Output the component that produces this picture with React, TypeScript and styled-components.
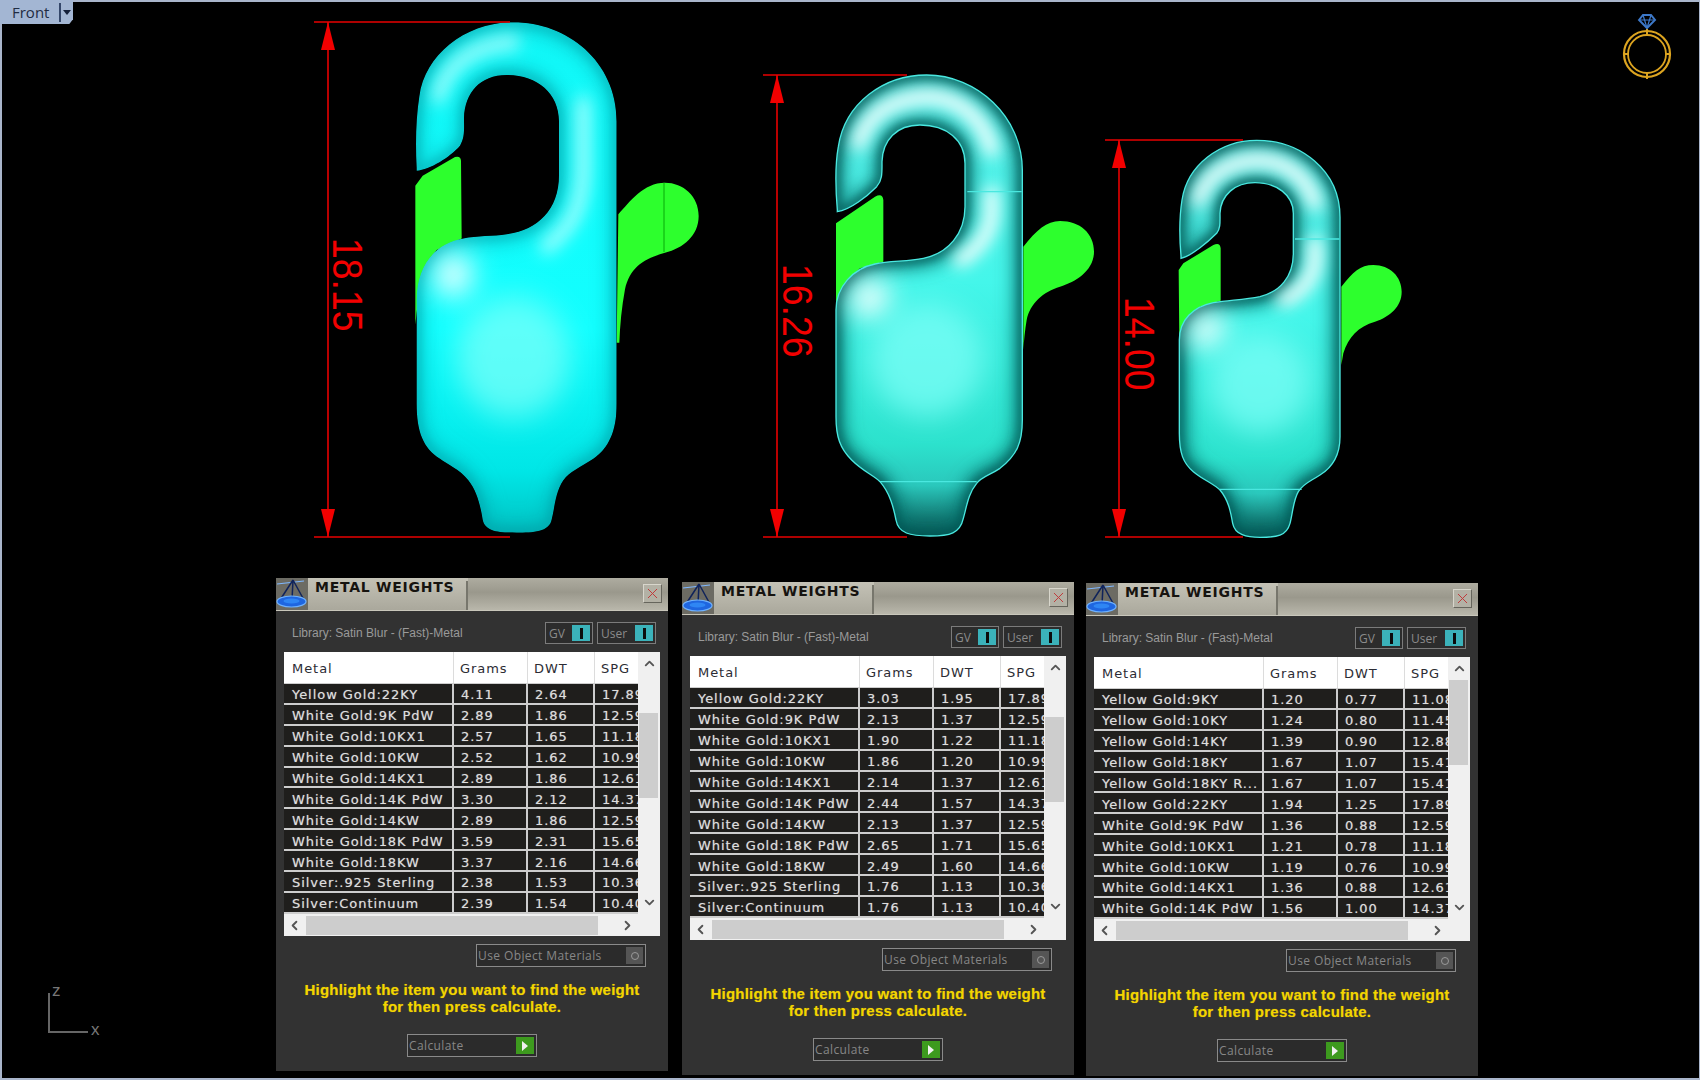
import { ChevronDown, ChevronLeft, ChevronRight, ChevronUp, X } from "lucide-react";
import styled, { createGlobalStyle } from "styled-components";

const GlobalStyle = createGlobalStyle`
    html, body {
        margin: 0;
        background: #000;
    }
`

const Canvas = styled.div`
    position: relative;
    width: 1700px;
    height: 1080px;
    overflow: hidden;
    background: #000;
    box-shadow: inset 2px 2px 0 #a9b5cb, inset -1px -2px 0 #a9b5cb;
    font-family: "DejaVu Sans", sans-serif;
`

const Drawing = styled.svg`
    position: absolute;
    left: 0;
    top: 0;
`

const FrontTab = styled.div`
    position: absolute;
    left: 0;
    top: 0;
    width: 73px;
    height: 24px;
    display: flex;
    align-items: center;
    box-sizing: border-box;
    padding-left: 12px;
    background: #a3b6d3;
    clip-path: polygon(0 0, 100% 0, 100% 80%, 95% 100%, 0 100%);
    color: #1f2c42;
    font-family: "Open Sans", sans-serif;
    font-size: 15px;
`

const FrontDivider = styled.span`
    width: 2px;
    height: 19px;
    margin-left: 10px;
    background: #34476a;
`

const FrontArrow = styled.span`
    width: 0;
    height: 0;
    margin-left: 2px;
    border-left: 4px solid transparent;
    border-right: 4px solid transparent;
    border-top: 5px solid #14203a;
`

const Panel = styled.div<{ $x: number; $y: number }>`
    position: absolute;
    left: ${props => props.$x}px;
    top: ${props => props.$y}px;
    width: 392px;
    height: 493px;
    display: flex;
    flex-direction: column;
    background: #323232;
`

const TitleBar = styled.div`
    height: 33px;
    flex: none;
    display: flex;
    box-sizing: border-box;
    border-bottom: 1px solid #c9c7bb;
    background: linear-gradient(#aeaca0, #9a988c 45%, #b9b7ab);
`

const TitleTab = styled.div`
    width: 160px;
    box-sizing: border-box;
    padding-left: 7px;
    margin-top: 3px;
    border-right: 2px solid #77766c;
    color: #16130f;
    font-size: 14px;
    line-height: 12px;
    font-weight: bold;
    letter-spacing: 0.75px;
    white-space: nowrap;
`

const TitleTabBackground = styled.div`
    display: flex;
    background: linear-gradient(#c4c2b6, #aaa89c);
`

const TitleRest = styled.div`
    flex: 1;
    display: flex;
    justify-content: flex-end;
    padding: 6px 6px 0 0;
`

const CloseButton = styled.div`
    width: 19px;
    height: 19px;
    display: flex;
    align-items: center;
    justify-content: center;
    box-sizing: border-box;
    border: 1px solid #d8d6cc;
    border-right-color: #66655c;
    border-bottom-color: #66655c;
    background: #b3b1a5;
    color: #c03a3a;
`

const LibraryRow = styled.div`
    height: 41px;
    flex: none;
    display: flex;
    align-items: center;
    box-sizing: border-box;
    padding: 3px 12px 0 16px;
`

const LibraryLabel = styled.span`
    flex: 1;
    color: #9a9a9a;
    font-family: "Liberation Sans", sans-serif;
    font-size: 12px;
`

const ToggleBox = styled.div<{ $width: number }>`
    width: ${props => props.$width}px;
    height: 22px;
    margin-left: 4px;
    display: flex;
    align-items: center;
    box-sizing: border-box;
    padding: 2px 2px 2px 3px;
    border: 1px solid #7b7b7b;
    background: #2c2c2c;
    color: #8b8b8b;
    font-family: "Open Sans", sans-serif;
    font-size: 12px;
`

const BoxLabel = styled.span`
    flex: 1;
    white-space: nowrap;
`

const ToggleKnob = styled.span`
    width: 18px;
    height: 100%;
    display: flex;
    align-items: center;
    justify-content: center;
    background: #3bb2ba;
    &::after {
        content: "";
        width: 3px;
        height: 11px;
        background: #0c0c0c;
    }
`

const TableFrame = styled.div`
    margin: 0 8px;
    height: 284px;
    flex: none;
    display: grid;
    grid-template-columns: 354px 22px;
    grid-template-rows: 262px 22px;
    background: #f0f0f0;
    font-size: 13px;
    letter-spacing: 0.95px;
`

const TableView = styled.div`
    overflow: hidden;
    padding-bottom: 1px;
`

const HeaderRow = styled.div`
    height: 32px;
    box-sizing: border-box;
    border-bottom: 1px solid #cdcdcd;
    display: grid;
    grid-template-columns: 168px 72px 65px 44px;
    gap: 2px;
    background: #fff;
`

const HeaderCell = styled.div<{ $first?: boolean }>`
    display: flex;
    align-items: center;
    padding: 1px 0 0 ${props => (props.$first ? 8 : 6)}px;
    border-right: 1px solid #dcdcdc;
    margin-right: -2px;
    color: #2c2c34;
`

const DataRow = styled.div`
    height: 20.9px;
    box-sizing: border-box;
    padding-bottom: 2px;
    display: grid;
    grid-template-columns: 168px 72px 65px 44px;
    gap: 2px;
    background: #cdcdcd;
`

const DataCell = styled.div<{ $first?: boolean }>`
    display: flex;
    align-items: center;
    padding: 3px 0 0 ${props => (props.$first ? 8 : 7)}px;
    overflow: hidden;
    background: #1f1e1c;
    color: #dedede;
    text-shadow: 0 0 1px rgba(222, 222, 222, 0.55);
    white-space: nowrap;
`

const VerticalBar = styled.div`
    display: flex;
    flex-direction: column;
    align-items: center;
    justify-content: space-between;
    padding: 4px 0;
    position: relative;
    color: #555;
`

const VerticalThumb = styled.div<{ $top: number }>`
    position: absolute;
    left: 1px;
    right: 2px;
    top: ${props => props.$top}px;
    height: 85px;
    background: #cdcdcd;
`

const HorizontalBar = styled.div`
    position: relative;
    display: flex;
    align-items: center;
    justify-content: space-between;
    padding: 0 3px;
    color: #555;
`

const HorizontalThumb = styled.div`
    position: absolute;
    left: 22px;
    width: 292px;
    top: 2px;
    bottom: 1px;
    background: #cdcdcd;
`

const OptionRow = styled.div`
    display: flex;
    justify-content: flex-end;
    padding: 8px 22px 0 0;
`

const OptionBox = styled.div<{ $width: number }>`
    width: ${props => props.$width}px;
    height: 23px;
    display: flex;
    align-items: center;
    box-sizing: border-box;
    padding: 2px 2px 2px 1px;
    border: 1px solid #8a8a8a;
    background: #2b2b2b;
    color: #878787;
    font-family: "Open Sans", sans-serif;
    font-size: 12px;
    letter-spacing: 0.4px;
`

const RadioKnob = styled.span`
    width: 17px;
    height: 100%;
    display: flex;
    align-items: center;
    justify-content: center;
    background: #555;
    &::after {
        content: "";
        width: 6px;
        height: 6px;
        border: 1px solid #9a9a9a;
        border-radius: 50%;
    }
`

const Instruction = styled.div`
    margin-top: 14px;
    color: #f3d500;
    font-family: "Liberation Sans", sans-serif;
    font-size: 15px;
    line-height: 17px;
    font-weight: bold;
    letter-spacing: 0.24px;
    text-shadow: 0 0 1px rgba(243, 213, 0, 0.5);
    text-align: center;
`

const CalculateRow = styled.div`
    display: flex;
    justify-content: center;
    margin-top: 19px;
`

const PlayKnob = styled.span`
    width: 18px;
    height: 100%;
    display: flex;
    align-items: center;
    justify-content: center;
    background: #3d9a1e;
    &::after {
        content: "";
        border-left: 6px solid #f0f0f0;
        border-top: 5px solid transparent;
        border-bottom: 5px solid transparent;
    }
`

const DimensionLabel = styled.text`
    fill: #f20000;
    font-family: "Liberation Sans", sans-serif;
    font-size: 42px;
`

const AxisLabel = styled.text`
    fill: #777;
    font-family: "Liberation Sans", sans-serif;
    font-size: 17px;
`

type HookSpec = {
    id: string;
    x: number;
    y: number;
    scaleY: number;
    body: string;
    greens: string[];
    seams: string[];
    streaks: string[];
    blobs: number[][];
    outlined: boolean;
}

const hooks: HookSpec[] = [
    {
        id: "a", x: 300, y: 0, scaleY: 0.357, outlined: false,
        body: "M350 470 C346 400 348 330 358 270 C375 150 500 62 640 62 C800 62 950 170 950 340 L950 1130 C950 1210 925 1255 880 1285 C840 1310 810 1320 790 1345 C765 1380 765 1420 755 1455 C748 1490 700 1492 650 1492 C600 1492 555 1490 548 1455 C540 1410 530 1375 505 1345 C480 1315 440 1300 420 1285 C370 1255 350 1210 350 1130 L350 840 C350 740 410 680 490 668 C530 660 580 662 620 656 C710 645 777 590 777 490 L777 340 C777 260 710 210 620 210 C540 210 495 260 492 330 C492 360 495 385 480 408 C450 440 390 475 350 478 Z",
        greens: [
            "M346 520 L368 492 L465 440 Q482 436 483 450 L485 668 L410 700 Q360 760 346 910 Z",
            "M955 600 C990 565 1030 512 1095 512 C1150 512 1196 550 1196 605 C1196 660 1150 695 1095 708 C1030 725 990 750 975 810 C965 860 960 910 958 960 L950 960 Z",
        ],
        seams: [],
        streaks: ["M415 270 C440 175 530 125 640 118", "M850 290 L850 480 C845 590 810 640 740 690"],
        blobs: [[460, 770, 60], [640, 1000, 170]],
    },
    {
        id: "b", x: 760, y: 60, scaleY: 1 / 3, outlined: true,
        body: "M232 450 C226 380 226 310 235 260 C255 130 370 45 500 45 C650 45 787 170 787 330 L787 1080 C787 1150 770 1185 720 1225 C690 1245 665 1250 650 1270 C625 1300 620 1340 610 1375 C600 1420 570 1428 510 1428 C450 1428 415 1420 408 1380 C400 1340 390 1300 360 1265 C340 1245 310 1235 275 1200 C240 1165 228 1130 228 1070 L228 750 C228 680 280 625 345 612 C390 602 440 605 490 595 C565 580 615 520 615 440 L615 310 C615 240 560 195 480 195 C410 195 368 240 366 305 C366 335 368 360 350 380 C320 410 270 450 232 455 Z",
        greens: [
            "M228 490 L345 410 Q368 398 370 420 L370 605 L300 625 Q250 670 228 750 Z",
            "M790 560 C830 510 860 483 900 483 C960 483 1002 520 1002 575 C1002 630 950 665 900 680 C850 695 810 730 800 780 C795 810 792 840 790 870 Z",
        ],
        seams: ["M622 395 L785 395", "M360 1265 L650 1265"],
        streaks: ["M295 250 C320 160 400 115 500 110 C590 110 670 170 695 270", "M695 400 L695 470 C685 530 650 570 600 600"],
        blobs: [[330, 715, 60], [500, 900, 170]],
    },
    {
        id: "c", x: 1100, y: 130, scaleY: 1 / 3, outlined: true,
        body: "M243 378 C238 320 238 260 246 210 C262 105 360 31 470 31 C600 31 720 120 720 262 L720 920 C720 975 700 1010 660 1035 C630 1055 610 1060 595 1085 C580 1110 578 1150 570 1180 C560 1218 530 1222 480 1222 C440 1222 405 1215 398 1180 C392 1145 385 1110 360 1080 C340 1060 310 1050 280 1025 C250 1000 238 970 238 910 L238 630 C238 570 280 530 340 518 C390 510 430 510 480 500 C540 485 580 440 580 370 L580 250 C580 195 530 158 465 158 C405 158 362 195 360 250 C360 275 362 295 350 310 C325 335 275 378 243 385 Z",
        greens: [
            "M236 420 L250 400 L340 345 Q360 335 362 355 L362 512 L300 530 Q260 570 238 630 Z",
            "M724 470 C760 425 780 405 820 405 C870 405 905 440 905 485 C905 530 870 560 825 575 C775 590 745 620 730 670 L724 705 Z",
        ],
        seams: ["M585 327 L718 327", "M360 1078 L605 1078"],
        streaks: ["M295 210 C315 135 385 95 470 90 C545 90 620 130 645 220", "M645 340 L645 400 C635 450 600 490 550 510"],
        blobs: [[320, 600, 55], [480, 760, 150]],
    },
]

const dimensions = [
    { x: 328, top: 22, bottom: 537, from: 314, to: 510, label: "18.15", labelX: 333, labelY: 238 },
    { x: 777, top: 75, bottom: 537, from: 763, to: 907, label: "16.26", labelX: 783, labelY: 264 },
    { x: 1119, top: 140, bottom: 537, from: 1105, to: 1243, label: "14.00", labelX: 1125, labelY: 297 },
]

const Blur = ({ id, amount }: { id: string; amount: number }) => (
    <filter id={id} filterUnits="userSpaceOnUse" x="-200" y="-200" width="1800" height="2100">
        <feGaussianBlur stdDeviation={amount} />
    </filter>
)

const Hook = ({ spec }: { spec: HookSpec }) => {
    const base = `base-${spec.id}`;
    const clip = `clip-${spec.id}`;
    return (
        <g transform={`translate(${spec.x} ${spec.y}) scale(${1 / 3} ${spec.scaleY})`}>
            {spec.greens.map(d => <path key={d} d={d} fill="#2dff2d" />)}
            {spec.id === "a" && <path d="M1092 512 L1092 706" stroke="#12c012" strokeWidth="4" />}
            <defs>
                <clipPath id={clip}><path d={spec.body} /></clipPath>
                <linearGradient id={base} x1="0" y1="0" x2="0" y2="1">
                    {spec.outlined ? (
                        <>
                            <stop offset="0" stopColor="#58efe9" />
                            <stop offset="0.45" stopColor="#44f6ea" />
                            <stop offset="0.8" stopColor="#2ce2cd" />
                            <stop offset="0.89" stopColor="#2ac8bc" />
                            <stop offset="0.96" stopColor="#127a74" />
                            <stop offset="1" stopColor="#0b4f4e" />
                        </>
                    ) : (
                        <>
                            <stop offset="0" stopColor="#10f8f8" />
                            <stop offset="0.6" stopColor="#12ffff" />
                            <stop offset="0.88" stopColor="#00e6e6" />
                            <stop offset="1" stopColor="#00c4c4" />
                        </>
                    )}
                </linearGradient>
                <Blur id={`soft-${spec.id}`} amount={15} />
                <Blur id={`mid-${spec.id}`} amount={24} />
                <Blur id={`wide-${spec.id}`} amount={42} />
            </defs>
            <g clipPath={`url(#${clip})`}>
                <path d={spec.body} fill={`url(#${base})`} />
                {/* broad falloff towards the edge, then the tight dark rim */}
                <path
                    d={spec.body}
                    fill="none"
                    stroke={spec.outlined ? "#0a6f6a" : "#00a2aa"}
                    strokeWidth="70"
                    strokeOpacity={spec.outlined ? 0.55 : 0.32}
                    filter={`url(#mid-${spec.id})`}
                />
                <path
                    d={spec.body}
                    fill="none"
                    stroke={spec.outlined ? "#06524f" : "#00939a"}
                    strokeWidth={spec.outlined ? 26 : 22}
                    strokeOpacity={spec.outlined ? 0.8 : 0.55}
                    filter={`url(#soft-${spec.id})`}
                />
                {spec.streaks.map(d => (
                    <path
                        key={d}
                        d={d}
                        fill="none"
                        stroke="#fff"
                        strokeWidth="42"
                        strokeLinecap="round"
                        strokeOpacity={spec.outlined ? 0.95 : 0.6}
                        filter={`url(#mid-${spec.id})`}
                    />
                ))}
                {spec.blobs.map(([cx, cy, r], i) => (
                    <circle
                        key={cx}
                        cx={cx}
                        cy={cy}
                        r={r}
                        fill={i === 0 ? "#fff" : "#7ffff8"}
                        fillOpacity={i === 0 ? 0.95 : 0.7}
                        filter={`url(#wide-${spec.id})`}
                    />
                ))}
            </g>
            {spec.outlined && <path d={spec.body} fill="none" stroke="#4ae8e0" strokeWidth="4" />}
            {spec.seams.map(d => <path key={d} d={d} fill="none" stroke="#4ae8e0" strokeWidth="4" />)}
        </g>
    );
}

const Dimension = ({ x, top, bottom, from, to, label, labelX, labelY }: typeof dimensions[number]) => (
    <g>
        <g stroke="#e80000" strokeWidth="1.6">
            <path d={`M${from} ${top} L${to} ${top}`} />
            <path d={`M${from} ${bottom} L${to} ${bottom}`} />
            <path d={`M${x} ${top} L${x} ${bottom}`} />
        </g>
        <path d={`M${x} ${top} L${x + 7} ${top + 28} L${x - 7} ${top + 28} Z`} fill="#f20000" />
        <path d={`M${x} ${bottom} L${x + 7} ${bottom - 28} L${x - 7} ${bottom - 28} Z`} fill="#f20000" />
        <DimensionLabel transform={`translate(${labelX} ${labelY}) rotate(90) scale(0.89 1)`}>{label}</DimensionLabel>
    </g>
)

const Scene = () => (
    <Drawing width="1700" height="1080" viewBox="0 0 1700 1080">
        {hooks.map(spec => <Hook key={spec.id} spec={spec} />)}
        {dimensions.map(d => <Dimension key={d.label} {...d} />)}

        {/* ring icon, top right */}
        <g fill="none" stroke="#dca420">
            <circle cx="1647" cy="54" r="23" strokeWidth="2.2" />
            <circle cx="1647" cy="54" r="19" strokeWidth="1.8" />
            <path d="M1647 29 L1647 36 M1623 54 L1629 54 M1665 54 L1671 54 M1647 73 L1647 79" strokeWidth="2" />
        </g>
        <g fill="none" stroke="#3d78c8" strokeWidth="2">
            <path d="M1639 20 L1643 15 L1651 15 L1655 20 L1647 28 Z" />
            <path d="M1639 20 L1655 20 M1643 15 L1647 28 M1651 15 L1647 28" strokeWidth="1.2" />
        </g>

        {/* world axes */}
        <path d="M49 993 L49 1032 L88 1032" fill="none" stroke="#666" strokeWidth="2" />
        <AxisLabel x="52" y="996">z</AxisLabel>
        <AxisLabel x="91" y="1035">x</AxisLabel>
    </Drawing>
)

const ScaleIcon = () => (
    <svg width="32" height="32" viewBox="0 0 32 32">
        <rect width="32" height="32" fill="#6c6b63" />
        <path d="M1 6 L19 4 L28 3" fill="none" stroke="#7fb8ff" strokeWidth="1.2" />
        <path d="M17 2 L4 22 M17 2 L28 22 M17 2 L16 22" fill="none" stroke="#10235a" strokeWidth="1.5" />
        <ellipse cx="15.5" cy="23.5" rx="14.5" ry="5.5" fill="#1f66e0" stroke="#6fb2ff" strokeWidth="1.2" />
        <ellipse cx="15.5" cy="23" rx="8" ry="2.6" fill="#2f86f4" />
    </svg>
)

type Row = [string, string, string, string];

const PanelView = ({ x, y, thumbTop, rows }: { x: number; y: number; thumbTop: number; rows: Row[] }) => (
    <Panel $x={x} $y={y}>
        <TitleBar>
            <ScaleIcon />
            <TitleTabBackground>
                <TitleTab>METAL WEIGHTS</TitleTab>
            </TitleTabBackground>
            <TitleRest>
                <CloseButton><X size={17} strokeWidth={1.4} /></CloseButton>
            </TitleRest>
        </TitleBar>
        <LibraryRow>
            <LibraryLabel>Library: Satin Blur - (Fast)-Metal</LibraryLabel>
            <ToggleBox $width={48}><BoxLabel>GV</BoxLabel><ToggleKnob /></ToggleBox>
            <ToggleBox $width={59}><BoxLabel>User</BoxLabel><ToggleKnob /></ToggleBox>
        </LibraryRow>
        <TableFrame>
            <TableView>
                <HeaderRow>
                    <HeaderCell $first>Metal</HeaderCell>
                    <HeaderCell>Grams</HeaderCell>
                    <HeaderCell>DWT</HeaderCell>
                    <HeaderCell>SPG</HeaderCell>
                </HeaderRow>
                {rows.map(row => (
                    <DataRow key={row[0]}>
                        <DataCell $first>{row[0]}</DataCell>
                        <DataCell>{row[1]}</DataCell>
                        <DataCell>{row[2]}</DataCell>
                        <DataCell>{row[3]}</DataCell>
                    </DataRow>
                ))}
            </TableView>
            <VerticalBar>
                <VerticalThumb $top={thumbTop} />
                <ChevronUp size={15} strokeWidth={3} />
                <ChevronDown size={15} strokeWidth={3} />
            </VerticalBar>
            <HorizontalBar>
                <HorizontalThumb />
                <ChevronLeft size={15} strokeWidth={3} />
                <ChevronRight size={15} strokeWidth={3} />
            </HorizontalBar>
        </TableFrame>
        <OptionRow>
            <OptionBox $width={170}><BoxLabel>Use Object Materials</BoxLabel><RadioKnob /></OptionBox>
        </OptionRow>
        <Instruction>Highlight the item you want to find the weight<br />for then press calculate.</Instruction>
        <CalculateRow>
            <OptionBox $width={130}><BoxLabel>Calculate</BoxLabel><PlayKnob /></OptionBox>
        </CalculateRow>
    </Panel>
)

const firstRows: Row[] = [
    ["Yellow Gold:22KY", "4.11", "2.64", "17.89"],
    ["White Gold:9K PdW", "2.89", "1.86", "12.59"],
    ["White Gold:10KX1", "2.57", "1.65", "11.18"],
    ["White Gold:10KW", "2.52", "1.62", "10.99"],
    ["White Gold:14KX1", "2.89", "1.86", "12.61"],
    ["White Gold:14K PdW", "3.30", "2.12", "14.37"],
    ["White Gold:14KW", "2.89", "1.86", "12.59"],
    ["White Gold:18K PdW", "3.59", "2.31", "15.65"],
    ["White Gold:18KW", "3.37", "2.16", "14.66"],
    ["Silver:.925 Sterling", "2.38", "1.53", "10.36"],
    ["Silver:Continuum", "2.39", "1.54", "10.40"],
]

const secondRows: Row[] = [
    ["Yellow Gold:22KY", "3.03", "1.95", "17.89"],
    ["White Gold:9K PdW", "2.13", "1.37", "12.59"],
    ["White Gold:10KX1", "1.90", "1.22", "11.18"],
    ["White Gold:10KW", "1.86", "1.20", "10.99"],
    ["White Gold:14KX1", "2.14", "1.37", "12.61"],
    ["White Gold:14K PdW", "2.44", "1.57", "14.37"],
    ["White Gold:14KW", "2.13", "1.37", "12.59"],
    ["White Gold:18K PdW", "2.65", "1.71", "15.65"],
    ["White Gold:18KW", "2.49", "1.60", "14.66"],
    ["Silver:.925 Sterling", "1.76", "1.13", "10.36"],
    ["Silver:Continuum", "1.76", "1.13", "10.40"],
]

const thirdRows: Row[] = [
    ["Yellow Gold:9KY", "1.20", "0.77", "11.08"],
    ["Yellow Gold:10KY", "1.24", "0.80", "11.45"],
    ["Yellow Gold:14KY", "1.39", "0.90", "12.88"],
    ["Yellow Gold:18KY", "1.67", "1.07", "15.41"],
    ["Yellow Gold:18KY R...", "1.67", "1.07", "15.41"],
    ["Yellow Gold:22KY", "1.94", "1.25", "17.89"],
    ["White Gold:9K PdW", "1.36", "0.88", "12.59"],
    ["White Gold:10KX1", "1.21", "0.78", "11.18"],
    ["White Gold:10KW", "1.19", "0.76", "10.99"],
    ["White Gold:14KX1", "1.36", "0.88", "12.61"],
    ["White Gold:14K PdW", "1.56", "1.00", "14.37"],
]

const App = () => (
    <Canvas>
        <GlobalStyle />
        <Scene />
        <FrontTab>
            Front
            <FrontDivider />
            <FrontArrow />
        </FrontTab>
        <PanelView x={276} y={578} thumbTop={61} rows={firstRows} />
        <PanelView x={682} y={582} thumbTop={61} rows={secondRows} />
        <PanelView x={1086} y={583} thumbTop={23} rows={thirdRows} />
    </Canvas>
)

export default App;
